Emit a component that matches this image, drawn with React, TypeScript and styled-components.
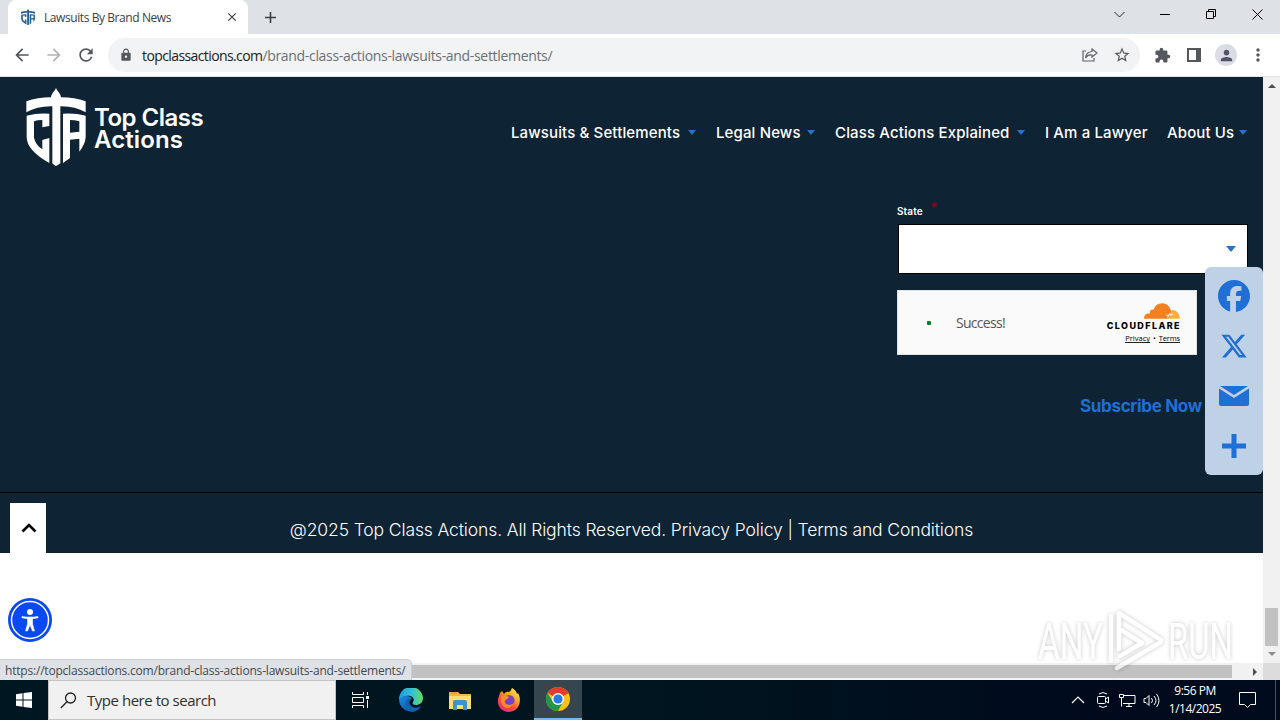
import React from 'react';
import styled, { createGlobalStyle } from 'styled-components';
import {
  MdAdd, MdArrowBack, MdArrowForward, MdClose, MdExtension, MdLock,
  MdMoreVert, MdPerson, MdRefresh, MdStarBorder,
} from 'react-icons/md';
import { FaFacebook, FaXTwitter } from 'react-icons/fa6';

const GlobalStyle = createGlobalStyle`
  * { box-sizing: border-box; }
  body { margin: 0; overflow: hidden; }
  svg { display: block; flex-shrink: 0; }
`;

const uiFont = `'Open Sans', 'Noto Sans', sans-serif`;
const siteFont = `Inter, 'Liberation Sans', sans-serif`;

const Screen = styled.div`
  position: relative;
  width: 1280px;
  height: 720px;
  display: flex;
  flex-direction: column;
  overflow: hidden;
  background: #fff;
  font-family: ${uiFont};
`;

const Label = styled.span<{ $size: number; $spacing?: number; $color?: string; $weight?: number }>`
  font-size: ${(p) => p.$size}px;
  letter-spacing: ${(p) => p.$spacing ?? 0}px;
  color: ${(p) => p.$color ?? 'inherit'};
  font-weight: ${(p) => p.$weight ?? 400};
  white-space: nowrap;
`;

/* browser chrome */
const TabStrip = styled.div`
  height: 34px;
  background: #dee1e6;
  display: flex;
  padding-left: 8px;
`;

const Tab = styled.div`
  width: 240px;
  height: 34px;
  padding: 0 9px 0 13px;
  display: flex;
  align-items: center;
  gap: 9px;
  background: #fff;
  border-radius: 8px 8px 0 0;
  color: #3c4043;
  & > svg:last-child { margin-left: auto; }
`;

const NewTab = styled.div`
  width: 44px;
  display: grid;
  place-items: center;
  color: #3c4043;
`;

const WindowButtons = styled.div`
  margin-left: auto;
  display: flex;
  align-items: center;
  height: 28px;
`;

const WindowButton = styled.div`
  width: 46px;
  display: grid;
  place-items: center;
`;

const Toolbar = styled.div`
  height: 43px;
  display: flex;
  align-items: center;
  padding-left: 12px;
  border-bottom: 1px solid #dfe3e8;
  color: #54575b;
`;

const NavButton = styled.div<{ $faded?: boolean }>`
  width: 32px;
  opacity: ${(p) => (p.$faded ? 0.45 : 1)};
`;

const AddressBar = styled.div`
  width: 1032px;
  height: 34px;
  display: flex;
  align-items: center;
  border-radius: 17px;
  background: #f1f3f4;
  padding: 0 9px 0 11px;
`;

const Url = styled.div`
  margin-left: 9px;
  flex: 1;
  color: #202124;
`;

const AddressIcons = styled.div`
  display: flex;
  gap: 14px;
`;

const ToolIcons = styled.div`
  display: grid;
  grid-template-columns: repeat(4, 32px);
  place-items: center;
  margin-left: 6px;
`;

const Avatar = styled.div`
  width: 22px;
  height: 22px;
  border-radius: 50%;
  background: #dadce6;
  color: #505469;
  display: grid;
  place-items: center;
`;

/* page */
const Viewport = styled.div`
  height: 603px;
  display: grid;
  grid-template-columns: 1263px 17px;
  grid-template-rows: 586px 17px;
`;

const Page = styled.main`
  background: #fff;
  font-family: ${siteFont};
`;

const DarkArea = styled.div`
  height: 415px;
  background: #0e2334;
  color: #fff;
`;

const SiteHeader = styled.header`
  height: 110px;
  padding: 11px 16px 0 26px;
  display: flex;
  justify-content: space-between;
`;

const Brand = styled.div`
  display: flex;
  gap: 8px;
`;

const BrandName = styled.div`
  padding-top: 19px;
  display: flex;
  flex-direction: column;
  line-height: 22px;
`;

const Menu = styled.nav`
  display: flex;
  gap: 20px;
  height: 89px;
  align-items: center;
`;

const MenuItem = styled.div`
  display: flex;
  align-items: center;
  gap: 5px;
`;

const Caret = styled.i<{ $wide?: boolean }>`
  border-left: ${(p) => (p.$wide ? 5.5 : 4.5)}px solid transparent;
  border-right: ${(p) => (p.$wide ? 5.5 : 4.5)}px solid transparent;
  border-top: ${(p) => (p.$wide ? 6 : 5)}px solid #2373cf;
`;

const Form = styled.section`
  width: 351px;
  margin-left: 897px;
  padding-top: 14px;
`;

const FieldLabel = styled.div`
  height: 23px;
  padding-bottom: 3px;
  display: flex;
  align-items: center;
  line-height: 14px;
`;

const Required = styled.sup`
  color: #8a0018;
  font-size: 14px;
  font-weight: 700;
  margin: -6px 0 0 7px;
`;

const SelectBox = styled.div`
  height: 50px;
  margin-left: 1px;
  background: #fff;
  border: 1px solid #000;
  display: flex;
  align-items: center;
  justify-content: flex-end;
  padding-right: 11px;
`;

const Turnstile = styled.div`
  width: 300px;
  height: 65px;
  margin-top: 16px;
  padding: 0 16px 0 29px;
  display: flex;
  align-items: center;
  background: #fafafa;
  border: 1px solid #e0e0e0;
  font-family: ${uiFont};
`;

const Dot = styled.i`
  width: 4px;
  height: 4px;
  border-radius: 1px;
  background: #008030;
  margin-right: 25px;
`;

const Cloudflare = styled.div`
  margin-left: auto;
  width: 76px;
  display: flex;
  flex-direction: column;
  align-items: flex-end;
  line-height: 10px;
  color: #000;
`;

const CloudflareName = styled(Label)`
  font-family: ${siteFont};
  line-height: 11px;
  margin-right: -1px;
`;

const Links = styled.div`
  display: flex;
  gap: 3px;
  height: 9px;
  margin-top: 3px;
  font-size: 7.5px;
  line-height: 8px;
  u { text-decoration: none; border-bottom: 1px solid #222; height: 9px; }
`;

const Subscribe = styled.div`
  margin: 39px 0 0 183px;
  line-height: 24px;
`;

const Footer = styled.footer`
  height: 61px;
  border-top: 1px solid #000;
  background: #0e2334;
  color: #fff;
  padding-top: 14px;
  text-align: center;
  line-height: 46px;
`;

const VScroll = styled.div`
  background: #f1f1f1;
  display: flex;
  flex-direction: column;
  justify-content: space-between;
  align-items: center;
  padding: 7px 0;
`;

const VThumb = styled.div`
  width: 13px;
  height: 38px;
  margin: 517px 0 4px;
  background: #c1c1c1;
`;

const HScroll = styled.div`
  grid-column: 1 / 3;
  background: #f1f1f1;
  display: flex;
  align-items: center;
`;

const HThumb = styled.div`
  width: 1215px;
  height: 13px;
  margin: 0 21px 0 17px;
  background: #c1c1c1;
`;

const ScrollCorner = styled.div`
  width: 17px;
  height: 17px;
  margin-left: auto;
  background: #dcdcdc;
`;

const ScrollArrow = styled.i<{ $dir: 'up' | 'down' | 'right' }>`
  width: 0;
  height: 0;
  border: 4px solid transparent;
  ${(p) => p.$dir === 'up' && 'border-top: 0; border-bottom-color: #505050;'}
  ${(p) => p.$dir === 'down' && 'border-bottom: 0; border-top-color: #8a8a8a;'}
  ${(p) => p.$dir === 'right' && 'border-right: 0; border-left-color: #505050;'}
`;

/* floating things */
const ShareBar = styled.div`
  position: absolute;
  left: 1205px;
  top: 267px;
  width: 58px;
  height: 208px;
  padding: 4px 0;
  border-radius: 6px;
  background: #bfd1e6;
  color: #1f6fd6;
  display: grid;
  grid-template-rows: repeat(4, 50px);
  place-items: center;
`;

const ToTop = styled.div`
  position: absolute;
  left: 10px;
  top: 503px;
  width: 36px;
  height: 50px;
  padding-left: 2px;
  background: #fff;
  display: grid;
  place-items: center;
`;

const Accessibility = styled.div`
  position: absolute;
  left: 8px;
  top: 598px;
`;

const StatusBubble = styled.div`
  position: absolute;
  left: 0;
  top: 659px;
  width: 412px;
  height: 21px;
  padding-left: 5px;
  line-height: 18px;
  background: #dee1e6;
  border: 1px solid #cbced2;
  border-width: 1px 1px 0 0;
  border-radius: 0 5px 0 0;
  color: #45494d;
`;

const Watermark = styled.svg`
  position: absolute;
  left: 1030px;
  top: 602px;
  filter: drop-shadow(0 0 2px rgba(0, 0, 0, 0.32));
  opacity: 0.7;
`;

/* taskbar */
const Taskbar = styled.div`
  height: 40px;
  display: flex;
  background: linear-gradient(90deg, #001721 0, #00141f 55%, #000a1c 85%, #000b1d 100%);
  color: #fff;
`;

const TaskButton = styled.div<{ $active?: boolean; $width?: number }>`
  width: ${(p) => p.$width ?? 49}px;
  height: 40px;
  display: grid;
  place-items: center;
  background: ${(p) => (p.$active ? '#36464f' : 'transparent')};
  border-bottom: ${(p) => (p.$active ? '2px solid #76b9ed' : '0')};
`;

const SearchBox = styled.div`
  width: 288px;
  background: #f1f1f1;
  border: 1px solid #c4c4c4;
  display: flex;
  align-items: center;
  gap: 10px;
  padding-left: 11px;
  color: #303030;
`;

const Tray = styled.div`
  margin-left: auto;
  display: flex;
  align-items: center;
`;

const TrayIcons = styled.div`
  display: flex;
  align-items: center;
  gap: 7px;
`;

const Clock = styled.div`
  width: 70px;
  display: flex;
  flex-direction: column;
  align-items: center;
  line-height: 18px;
`;

const Notifications = styled.div`
  width: 34px;
  display: grid;
  place-items: center;
`;

const ShowDesktop = styled.div`
  width: 5px;
  height: 40px;
  margin-left: 11px;
  border-left: 1px solid #48505e;
`;

const Shield: React.FC<{ width: number; height: number; color: string }> = ({ width, height, color }) => (
  <svg width={width} height={height} viewBox="78 265 180 234" preserveAspectRatio="none" fill={color}>
    <path d="M168 265C174 277 182 282 183 293Q224 293 257 305V338Q224 319 181 320V491Q173 498 168 499Q163 498 157 491V320Q112 319 79 338V305Q112 293 153 293C154 282 162 277 168 265Z" />
    <path d="M80 348Q113 339 148 342V379L127 383V361Q112 361 102 365V414Q106 435 127 449V421L148 415V490Q80 452 80 412Z" />
    <path fillRule="evenodd" d="M189 342Q224 339 257 348V412Q256 433 238 456V417L210 420V475L189 490ZM210 361V399L238 396V365Q224 361 210 361Z" />
  </svg>
);

const menu = [
  { text: 'Lawsuits & Settlements', width: 172, caret: true },
  { text: 'Legal News', width: 86, caret: true },
  { text: 'Class Actions Explained', width: 177, caret: true },
  { text: 'I Am a Lawyer', width: 102, caret: false },
  { text: 'About Us', width: 67, caret: true },
];

const MenuText = styled(Label)<{ $width: number }>`
  width: ${(p) => p.$width}px;
`;

const BrowserChrome = () => (
  <>
    <TabStrip>
      <Tab>
        <Shield width={14} height={16} color="#26659c" />
        <Label $size={12} $spacing={-0.42}>Lawsuits By Brand News</Label>
        <MdClose size={14} />
      </Tab>
      <NewTab><MdAdd size={19} /></NewTab>
      <WindowButtons>
        <WindowButton><svg width="11" height="7" fill="none" stroke="#222"><path d="M.5 1l5 5 5-5" /></svg></WindowButton>
        <WindowButton><svg width="10" height="1"><path d="M0 .5h10" stroke="#000" /></svg></WindowButton>
        <WindowButton><svg width="10" height="10" fill="none" stroke="#000"><path d="M.5 2.5h7v7h-7zM2.500 2.500v-2h7v7h-2" /></svg></WindowButton>
        <WindowButton><svg width="11" height="11" stroke="#000"><path d="M.5.5l10 10M10.500.5l-10 10" /></svg></WindowButton>
      </WindowButtons>
    </TabStrip>
    <Toolbar>
      <NavButton><MdArrowBack size={20} /></NavButton>
      <NavButton $faded><MdArrowForward size={20} /></NavButton>
      <NavButton><MdRefresh size={20} /></NavButton>
      <AddressBar>
        <MdLock size={14} />
        <Url>
          <Label $size={14} $spacing={-0.6}>topclassactions.com</Label>
          <Label $size={14} $spacing={-0.32} $color="#6b7075">/brand-class-actions-lawsuits-and-settlements/</Label>
        </Url>
        <AddressIcons>
          <svg width="18" height="18" fill="none" stroke="#5f6368" strokeWidth="1.200"><path d="M5 5H2v10h11v-3M11 3l5 4-5 4V9Q7 8 4.500 12Q5 6 11 5.500Z" /></svg>
          <MdStarBorder size={18} />
        </AddressIcons>
      </AddressBar>
      <ToolIcons>
        <MdExtension size={17} />
        <svg width="14" height="14"><path d="M1 1h12v12H1z" fill="#fff" stroke="#54575b" strokeWidth="2" /><path d="M9 0h5v14H9z" fill="#54575b" /></svg>
        <Avatar><MdPerson size={17} /></Avatar>
        <MdMoreVert size={20} />
      </ToolIcons>
    </Toolbar>
  </>
);

const CloudIcon = () => (
  <svg width="36" height="17" viewBox="0 0 37 17">
    <path d="M0 16Q0 10 6 10.500Q5.500 6 10 6.500Q12 0 19 0Q25 0 27.500 7Q29 10 25.500 16Z" fill="#f48120" />
    <path d="M26 16L28.500 7Q36 7 37 16Z" fill="#faad3f" />
    <path d="M24 15L27 10M23 12.500L30 11.500" fill="none" stroke="#fbe3ca" strokeWidth="1.300" />
  </svg>
);

const SitePage = () => (
  <Page>
    <DarkArea>
      <SiteHeader>
        <Brand>
          <Shield width={60} height={78} color="#fff" />
          <BrandName>
            <Label $size={24} $weight={600} $spacing={-0.5}>Top Class</Label>
            <Label $size={24} $weight={600} $spacing={0.1}>Actions</Label>
          </BrandName>
        </Brand>
        <Menu>
          {menu.map((item) => (
            <MenuItem key={item.text}>
              <MenuText $size={15} $weight={500} $spacing={0.13} $width={item.width}>{item.text}</MenuText>
              {item.caret && <Caret />}
            </MenuItem>
          ))}
        </Menu>
      </SiteHeader>
      <Form>
        <FieldLabel>
          <Label $size={10} $weight={600} $spacing={0.1}>State</Label>
          <Required>*</Required>
        </FieldLabel>
        <SelectBox><Caret $wide /></SelectBox>
        <Turnstile>
          <Dot />
          <Label $size={14} $color="#555" $spacing={-0.7}>Success!</Label>
          <Cloudflare>
            <CloudIcon />
            <CloudflareName $size={9} $weight={800} $spacing={1.4}>CLOUDFLARE</CloudflareName>
            <Links>
              <u><Label $size={7.5}>Privacy</Label></u>
              <Label $size={7.5}>•</Label>
              <u><Label $size={7.5} $spacing={-0.15}>Terms</Label></u>
            </Links>
          </Cloudflare>
        </Turnstile>
        <Subscribe><Label $size={17} $weight={700} $color="#1f6fd6" $spacing={-0.33}>Subscribe Now</Label></Subscribe>
      </Form>
    </DarkArea>
    <Footer>
      <Label $size={17.5} $weight={300} $spacing={-0.12}>@2025 Top Class Actions. All Rights Reserved. Privacy Policy | Terms and Conditions</Label>
    </Footer>
  </Page>
);

const EdgeIcon = () => (
  <svg width="24" height="24" viewBox="0 0 24 24">
    <defs>
      <linearGradient id="edgeTop" x1="0" x2="1"><stop stopColor="#1f9de0" /><stop offset=".55" stopColor="#35c1d0" /><stop offset="1" stopColor="#66dc58" /></linearGradient>
      <linearGradient id="edgeLow" x1="0" x2="1" y2="1"><stop stopColor="#1a8be0" /><stop offset="1" stopColor="#0a4f9e" /></linearGradient>
    </defs>
    <path d="M0 12A12 12 0 0 1 24 10C24 15 20 17 17 17C14 17 13 16 14 14C17 9 10 6 4 9Q1 10 0 12Z" fill="url(#edgeTop)" />
    <path d="M0 12C2 7 12 7 13 11C9 11 9 20 16 20C19 20 21 19 22 18A12 12 0 0 1 0 12Z" fill="url(#edgeLow)" />
    <path d="M8 12C4 17 8 24 14 24C18 23 21 21 22 18C18 21 11 20 10 14Q10 12 12 11Q10 10 8 12Z" fill="#1262ae" />
  </svg>
);

const FolderIcon = () => (
  <svg width="22" height="19" viewBox="0 0 22 19">
    <path d="M0 1h9l2 2h11v15H0z" fill="#f5b83d" />
    <path d="M0 5h22v13H0z" fill="#ffdc73" />
    <path d="M4 11q0-2 2-2h10q2 0 2 2v8h-4v-5H8v5H4z" fill="#3f91cf" />
    <path d="M2 2h6" stroke="#db8e20" />
  </svg>
);

const FirefoxIcon = () => (
  <svg width="24" height="24" viewBox="0 0 24 24">
    <defs>
      <linearGradient id="fox" x1=".85" y1="0" x2=".2" y2="1"><stop stopColor="#fff44f" /><stop offset=".35" stopColor="#ffa52c" /><stop offset=".65" stopColor="#ff4b38" /><stop offset="1" stopColor="#e52382" /></linearGradient>
    </defs>
    <path d="M3 5L5 3L7 6Q9 3 12 4Q14 3 15 0Q19 2 20 6L21 5C25 12 23 23 12 24C4 24 0 18 1 11Z" fill="url(#fox)" />
    <circle cx="12" cy="12.500" r="5.500" fill="#7542c8" />
    <path d="M4 8Q8 6 12 9L10 11Q7 12 8 15Q12 19 17 15Q12 23 6 18Q3 14 4 8Z" fill="#ff8c28" />
  </svg>
);

const ChromeIcon = () => (
  <svg width="24" height="24" viewBox="0 0 24 24">
    <circle cx="12" cy="12" r="12" fill="#fbc116" />
    <path d="M12 12L1.600 6A12 12 0 0 1 22.400 6Z" fill="#e33b2e" />
    <path d="M12 6.500H22.600L22.400 6H12Z" fill="#e33b2e" />
    <path d="M1.600 6A12 12 0 0 0 12 24L17 15L12 12L7 15Z" fill="#229648" />
    <circle cx="12" cy="12" r="6" fill="#fff" />
    <circle cx="12" cy="12" r="4.600" fill="#2979e5" />
  </svg>
);

const WindowsTaskbar = () => (
  <Taskbar>
    <TaskButton $width={48}>
      <svg width="16" height="16" fill="#fff"><path d="M0 2.200L6.500 1.300V7.500H0zM7.500 1.100L16 0V7.500H7.500zM0 8.500h6.500v6.200L0 13.800zM7.500 8.500H16V16L7.500 14.900z" /></svg>
    </TaskButton>
    <SearchBox>
      <svg width="17" height="17" fill="none" stroke="#222" strokeWidth="1.300"><circle cx="10.500" cy="6" r="5" /><path d="M7 9.800L.8 16" /></svg>
      <Label $size={15} $spacing={-0.47}>Type here to search</Label>
    </SearchBox>
    <TaskButton>
      <svg width="17" height="16" fill="none" stroke="#fff"><path d="M.5 0v2.500h11V0M.5 16v-2.500h11V16M.5 5.500h11v5H.5zM15.500 0v3M15.500 8v8" /><path d="M14 4h3v3h-3z" fill="#fff" stroke="none" /></svg>
    </TaskButton>
    <TaskButton $width={51}><EdgeIcon /></TaskButton>
    <TaskButton $width={48}><FolderIcon /></TaskButton>
    <TaskButton $width={50}><FirefoxIcon /></TaskButton>
    <TaskButton $width={48} $active><ChromeIcon /></TaskButton>
    <Tray>
      <TrayIcons>
        <svg width="18" height="12" fill="none" stroke="#fff" strokeWidth="1.200"><path d="M3 9l6-6 6 6" /></svg>
        <svg width="18" height="18" fill="none" stroke="#fff"><rect x="3.500" y="5.500" width="8" height="7" rx="1" /><path d="M11.500 8l3-2v6l-3-2M5 3q4-3 8 0M5 15q4 3 8 0" /></svg>
        <svg width="17" height="15" fill="none" stroke="#fff"><path d="M5 2.500h11v8H4M10 10.500v3M7 13.500h6M.5 1.500h4v3h-4zM2.500 4.500v9" /></svg>
        <svg width="17" height="15" fill="none" stroke="#fff"><path d="M1 5.500h2l3-3v10l-3-3H1zM8.500 5q2 2.500 0 5M11 3q4 4.500 0 9M13.500 1q5 6.500 0 13" /></svg>
      </TrayIcons>
      <Clock>
        <Label $size={12} $spacing={-0.5}>9:56 PM</Label>
        <Label $size={12} $spacing={-0.5}>1/14/2025</Label>
      </Clock>
      <Notifications>
        <svg width="17" height="17" fill="none" stroke="#fff"><path d="M.5.5h16v12h-5l-3 3-3-3h-5z" /></svg>
      </Notifications>
      <ShowDesktop />
    </Tray>
  </Taskbar>
);

const App: React.FC = () => (
  <Screen>
    <GlobalStyle />
    <BrowserChrome />
    <Viewport>
      <SitePage />
      <VScroll>
        <ScrollArrow $dir="up" />
        <VThumb />
        <ScrollArrow $dir="down" />
      </VScroll>
      <HScroll>
        <HThumb />
        <ScrollArrow $dir="right" />
        <ScrollCorner />
      </HScroll>
    </Viewport>
    <WindowsTaskbar />
    <ShareBar>
      <FaFacebook size={32} />
      <FaXTwitter size={28} />
      <svg width="30" height="20" fill="currentColor"><path d="M1 0h28L15 9zM0 2.500L15 12 30 2.500V18q0 2-2 2H2q-2 0-2-2z" /></svg>
      <svg width="24" height="24" fill="currentColor"><path d="M9.500 0h5v9.500H24v5h-9.500V24h-5v-9.500H0v-5h9.500z" /></svg>
    </ShareBar>
    <ToTop>
      <svg width="16" height="10" fill="none" stroke="#000" strokeWidth="2.600"><path d="M1.500 8.500L8 2l6.500 6.500" /></svg>
    </ToTop>
    <Accessibility>
      <svg width="44" height="44" viewBox="0 0 44 44">
        <circle cx="22" cy="22" r="22" fill="#0848f5" />
        <circle cx="22" cy="22" r="18.500" fill="none" stroke="#fff" strokeWidth="1.500" />
        <circle cx="22" cy="14" r="3" fill="#fff" />
        <path d="M14.500 19.200L20 20h4l5.500-.8" fill="none" stroke="#fff" strokeWidth="2" strokeLinecap="round" />
        <path d="M19.500 19h5v7l2 7h-2L22 27l-2.500 6h-2l2-7z" fill="#fff" stroke="#fff" strokeWidth=".6" />
      </svg>
    </Accessibility>
    <StatusBubble>
      <Label $size={12} $spacing={-0.2}>https://topclassactions.com/brand-class-actions-lawsuits-and-settlements/</Label>
    </StatusBubble>
    <Watermark width="250" height="76">
      <g fill="#fff" fontFamily="Roboto, sans-serif" fontSize="50">
        <text x="8" y="57" textLength="65" lengthAdjust="spacingAndGlyphs">ANY</text>
        <text x="138" y="57" textLength="65" lengthAdjust="spacingAndGlyphs">RUN</text>
      </g>
      <path d="M81 59V14M89 47V11L131 38M90 54L112 41L91 28M87 66L131 40" fill="none" stroke="#fff" strokeWidth="4.500" strokeLinejoin="round" strokeLinecap="round" />
    </Watermark>
  </Screen>
);

export default App;
